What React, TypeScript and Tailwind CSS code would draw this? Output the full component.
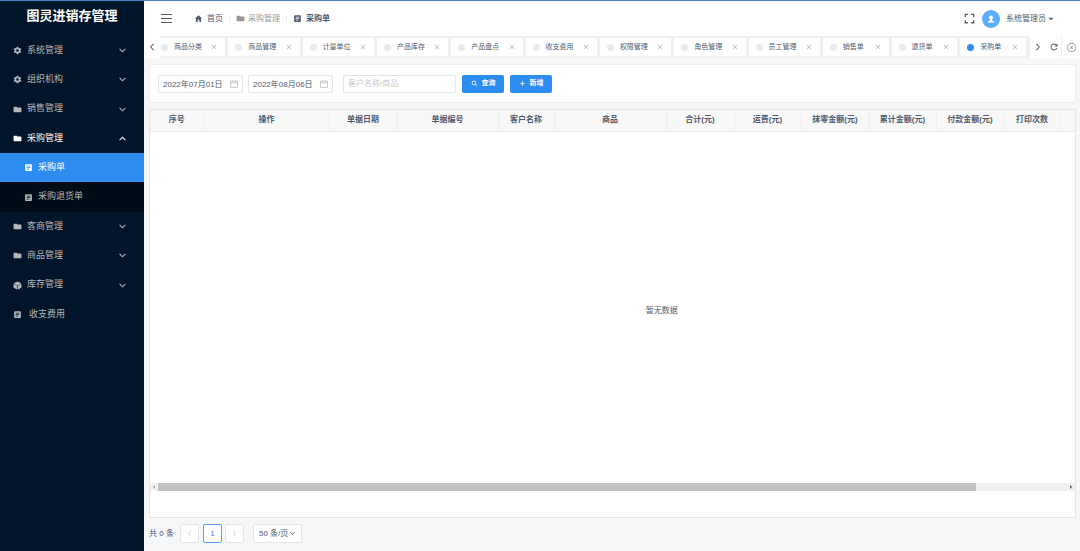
import { useState } from 'react';
import type { IconType } from 'react-icons';
import {
  IoIosArrowBack,
  IoIosArrowDown,
  IoIosArrowForward,
  IoIosArrowUp,
  IoIosCloseCircleOutline,
  IoIosSearch,
  IoMdAdd,
  IoMdArrowDropdown,
  IoMdClose,
  IoMdCube,
  IoMdExpand,
  IoMdFolder,
  IoMdHome,
  IoMdRefresh,
  IoMdSettings,
} from 'react-icons/io';
import { MdArticle } from 'react-icons/md';

interface MenuItem {
  title: string;
  icon: IconType;
  kind: 'group' | 'opened' | 'child' | 'leaf';
}

const menuItems: MenuItem[] = [
  { title: '系统管理', icon: IoMdSettings, kind: 'group' },
  { title: '组织机构', icon: IoMdSettings, kind: 'group' },
  { title: '销售管理', icon: IoMdFolder, kind: 'group' },
  { title: '采购管理', icon: IoMdFolder, kind: 'opened' },
  { title: '采购单', icon: MdArticle, kind: 'child' },
  { title: '采购退货单', icon: MdArticle, kind: 'child' },
  { title: '客商管理', icon: IoMdFolder, kind: 'group' },
  { title: '商品管理', icon: IoMdFolder, kind: 'group' },
  { title: '库存管理', icon: IoMdCube, kind: 'group' },
  { title: '收支费用', icon: MdArticle, kind: 'leaf' },
];

const tabs = [
  '商品分类',
  '商品管理',
  '计量单位',
  '产品库存',
  '产品盘点',
  '收支费用',
  '权限管理',
  '角色管理',
  '员工管理',
  '销售单',
  '退货单',
  '采购单',
];

const columns = [
  { title: '序号', width: 'w-[54px]' },
  { title: '操作', width: 'w-[125px]' },
  { title: '单据日期', width: 'w-[68px]' },
  { title: '单据编号', width: 'w-[101px]' },
  { title: '客户名称', width: 'w-[56px]' },
  { title: '商品', width: 'w-[112px]' },
  { title: '合计(元)', width: 'w-[68px]' },
  { title: '运费(元)', width: 'w-[67px]' },
  { title: '抹零金额(元)', width: 'w-[68px]' },
  { title: '累计金额(元)', width: 'w-[67px]' },
  { title: '付款金额(元)', width: 'w-[68px]' },
  { title: '打印次数', width: 'w-[56px]' },
  { title: '', width: '' },
];

function Sidebar({ current }: { current: string }) {
  const itemClass = (item: MenuItem) => {
    if (item.title === current) return 'bg-[#2d8cf0] pl-6 text-white';
    if (item.kind === 'child') return 'bg-[#000c17] pl-6 text-[#b3b8bd]';
    if (item.kind === 'opened') return 'pl-[13px] text-white';
    return 'pl-[13px] text-[#b3b8bd]';
  };

  return (
    <aside className="w-36 shrink-0 bg-[#001529]">
      <h1 className="h-[35px] pt-[5px] text-center text-[13px] leading-5 font-bold text-white">图灵进销存管理</h1>
      <nav className="grid h-[293px] auto-rows-fr">
        {menuItems.map((item) => (
          <a key={item.title} href="#" className={`flex items-center pr-[17px] text-[9px] ${itemClass(item)}`}>
            <item.icon className="size-[9px]" />
            <span className={item.kind === 'leaf' ? 'ml-[7px]' : 'ml-[5px]'}>{item.title}</span>
            {item.kind === 'group' && (
              <IoIosArrowDown className="ml-auto size-[9px]" stroke="currentColor" strokeWidth="20" />
            )}
            {item.kind === 'opened' && (
              <IoIosArrowUp className="ml-auto size-[9px]" stroke="currentColor" strokeWidth="20" />
            )}
          </a>
        ))}
      </nav>
    </aside>
  );
}

function Header() {
  return (
    <header className="flex h-[35px] shrink-0 items-center bg-white pr-6 pl-[17px] text-[8px] text-[#515a6e]">
      <button type="button" aria-label="菜单" className="flex w-[11px] flex-col gap-[3px]">
        <span className="h-px bg-[#515a6e]" />
        <span className="h-px bg-[#515a6e]" />
        <span className="h-px bg-[#515a6e]" />
      </button>
      <nav className="ml-[22px] flex items-center">
        <a href="#" className="flex items-center gap-1">
          <IoMdHome className="size-[9px]" />
          首页
        </a>
        <span className="mx-[6px] h-[6px] w-px bg-[#e8eaec]" />
        <a href="#" className="flex items-center gap-[3px] text-[#999]">
          <IoMdFolder className="size-[9px]" />
          采购管理
        </a>
        <span className="mx-[6px] h-[6px] w-px bg-[#e8eaec]" />
        <span className="flex items-center gap-1 font-bold">
          <MdArticle className="size-[9px]" />
          采购单
        </span>
      </nav>
      <button type="button" aria-label="全屏" className="ml-auto">
        <IoMdExpand className="size-[13px]" />
      </button>
      <span className="ml-[6px] flex size-[18px] items-center justify-center rounded-full bg-[#5cadff] text-white">
        <svg className="size-2" viewBox="0 0 8 8" fill="currentColor">
          <path d="M4 .5c1.2 0 1.9.9 1.9 2 0 1-.4 1.8-1 2.2v.7c1.2.2 2.3.6 2.3 2.1H.8c0-1.500 1.100-1.900 2.300-2.100v-.7c-.6-.4-1-1.200-1-2.200 0-1.100.7-2 1.900-2z" />
        </svg>
      </span>
      <button type="button" className="ml-[6px] flex items-center">
        系统管理员
        <IoMdArrowDropdown className="size-[10px]" />
      </button>
    </header>
  );
}

function TabsBar({ current, onSelect }: { current: string; onSelect: (tab: string) => void }) {
  return (
    <div className="flex h-[22px] shrink-0 bg-[#f0f0f0] text-[7px] text-[#515a6e]">
      <button type="button" aria-label="向左" className="z-10 flex w-4 shrink-0 items-center justify-center bg-white">
        <IoIosArrowBack className="size-[10px]" />
      </button>
      <div className="-ml-[6px] flex flex-1 gap-[3px] py-[2px] pr-1">
        {tabs.map((tab) => (
          <div
            key={tab}
            className={`flex items-center bg-white px-[7px] ${tab.length === 4 ? 'flex-[72]' : 'flex-[65]'}`}
          >
            <span className={`size-[7px] rounded-full ${tab === current ? 'bg-[#2d8cf0]' : 'bg-[#e8eaec]'}`} />
            <button type="button" className="ml-[6px] whitespace-nowrap" onClick={() => onSelect(tab)}>
              {tab}
            </button>
            <button type="button" aria-label={`关闭${tab}`} className="ml-auto text-[#b0b4bc]">
              <IoMdClose className="size-[8px]" />
            </button>
          </div>
        ))}
      </div>
      <div className="flex shrink-0 items-stretch bg-white">
        <button type="button" aria-label="向右" className="flex w-4 items-center justify-center">
          <IoIosArrowForward className="size-[10px]" />
        </button>
        <button type="button" aria-label="刷新" className="flex w-[15px] items-center justify-center">
          <IoMdRefresh className="size-[10px]" />
        </button>
        <button
          type="button"
          aria-label="关闭"
          className="flex w-[19px] items-center justify-center border-l border-[#f0f0f0] text-[#808695]"
        >
          <IoIosCloseCircleOutline className="size-[11px]" />
        </button>
      </div>
    </div>
  );
}

function DateField({ label, value }: { label: string; value: string }) {
  return (
    <label className="relative flex w-[85px]">
      <input
        type="text"
        aria-label={label}
        defaultValue={value}
        className="h-[18px] w-full rounded-xs border border-[#e3e5e8] bg-white pl-1 text-[8px] text-[#515a6e]"
      />
      <svg
        className="absolute top-[5px] right-[5px] size-2 text-[#b0b4bc]"
        viewBox="0 0 8 8"
        fill="none"
        stroke="currentColor"
        strokeWidth="0.7"
      >
        <path d="M.5 1.2h7v6.3h-7zM.5 2.8h7M2.3.2v1M5.7.2v1" />
      </svg>
    </label>
  );
}

function FilterCard() {
  return (
    <form className="flex h-[39px] shrink-0 items-center rounded-xs border border-[#eceef0] bg-white pl-2">
      <DateField label="开始日期" value="2022年07月01日" />
      <div className="w-[5px]" />
      <DateField label="结束日期" value="2022年08月06日" />
      <input
        type="text"
        aria-label="客户名称/商品"
        placeholder="客户名称/商品"
        className="ml-[10px] h-[18px] w-[113px] rounded-xs border border-[#e3e5e8] bg-white pl-1 text-[8px] placeholder:text-[#c5c8ce]"
      />
      <button
        type="button"
        className="ml-[6px] flex h-[18px] w-[42px] items-center justify-center gap-1 rounded-xs bg-[#2d8cf0] text-[7px] font-bold text-white"
      >
        <IoIosSearch className="size-[7px]" strokeWidth="20" stroke="currentColor" />
        查询
      </button>
      <button
        type="button"
        className="ml-[6px] flex h-[18px] w-[42px] items-center justify-center gap-1 rounded-xs bg-[#2d8cf0] text-[7px] font-bold text-white"
      >
        <IoMdAdd className="size-[7px]" strokeWidth="20" stroke="currentColor" />
        新增
      </button>
    </form>
  );
}

function OrderTable() {
  return (
    <section className="mt-[6px] flex min-h-0 flex-1 flex-col border border-[#e3e6ea] bg-white">
      <div className="flex-1 overflow-hidden">
        <table className="h-full w-[1024px] table-fixed border-collapse text-[8px] text-[#515a6e]">
          <thead>
            <tr className="h-[21px] border-b border-[#e8eaec] bg-[#f8f8f9]">
              {columns.map((column) => (
                <th
                  key={column.title}
                  className={`border-r border-[#eceef0] p-0 font-bold whitespace-nowrap ${column.width}`}
                >
                  {column.title}
                </th>
              ))}
            </tr>
          </thead>
          <tbody>
            <tr>
              <td colSpan={columns.length} className="pt-2 text-center">
                暂无数据
              </td>
            </tr>
          </tbody>
        </table>
      </div>
      <div className="flex h-2 shrink-0 items-center bg-[#f1f1f1]">
        <span className="flex w-2 justify-center">
          <span className="border-y-2 border-r-2 border-y-transparent border-r-[#a3a3a3]" />
        </span>
        <div className="flex h-full flex-1">
          <div className="h-full w-[90%] bg-[#c1c1c1]" />
        </div>
        <span className="flex w-2 justify-center">
          <span className="border-y-2 border-l-2 border-y-transparent border-l-[#505050]" />
        </span>
      </div>
      <div className="h-[26px] shrink-0" />
    </section>
  );
}

function Pagination() {
  const pageButton = 'flex size-[19px] items-center justify-center rounded-xs border bg-white';

  return (
    <footer className="flex h-[33px] shrink-0 items-center pb-[2px] text-[8px] text-[#515a6e]">
      <span className="w-[31px]">共 0 条</span>
      <button type="button" aria-label="上一页" className={`${pageButton} border-[#e3e5e8] text-[#c5c8ce]`}>
        <IoIosArrowBack className="size-[7px]" />
      </button>
      <button type="button" className={`${pageButton} ml-1 border-[#57a3f3] text-[#2d8cf0]`}>
        1
      </button>
      <button type="button" aria-label="下一页" className={`${pageButton} ml-[3px] border-[#e3e5e8] text-[#c5c8ce]`}>
        <IoIosArrowForward className="size-[7px]" />
      </button>
      <div className="relative ml-[9px] flex">
        <select
          aria-label="每页条数"
          className="h-[19px] w-[49px] appearance-none rounded-xs border border-[#e3e5e8] bg-white pl-[5px] text-[8px]"
        >
          <option>50 条/页</option>
          <option>100 条/页</option>
        </select>
        <IoIosArrowDown className="pointer-events-none absolute top-[6px] right-[6px] size-[7px]" />
      </div>
    </footer>
  );
}

export default function App() {
  const [current, setCurrent] = useState('采购单');

  return (
    <div className="flex h-screen flex-col border-t border-[#4a80cc] bg-[#f5f7f9] font-['Liberation_Sans','Noto_Sans_CJK_SC',sans-serif]">
      <div className="flex min-h-0 flex-1">
        <Sidebar current={current} />
        <div className="flex min-w-0 flex-1 flex-col">
          <Header />
          <TabsBar current={current} onSelect={setCurrent} />
          <main className="flex min-h-0 flex-1 flex-col pt-[6px] pr-1 pl-[5px]">
            <FilterCard />
            <OrderTable />
            <Pagination />
          </main>
        </div>
      </div>
    </div>
  );
}
